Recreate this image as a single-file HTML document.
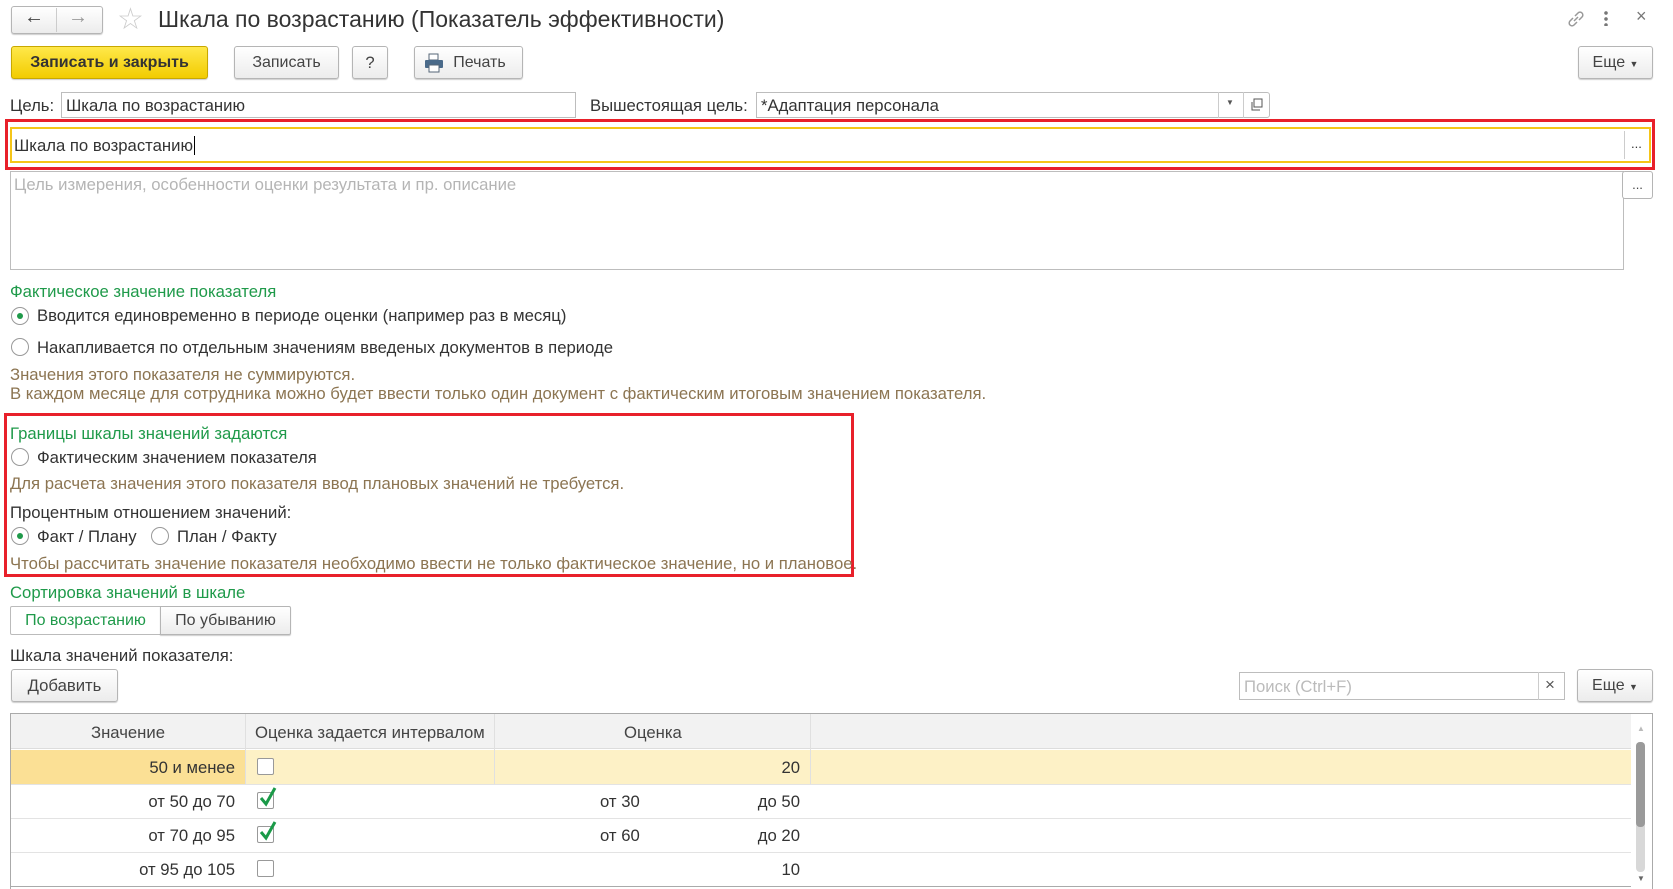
<!DOCTYPE html>
<html><head><meta charset="utf-8"><style>
*{box-sizing:border-box;margin:0;padding:0}
body{width:1673px;height:889px;overflow:hidden;background:#fff;font-family:"Liberation Sans",Arial,sans-serif;font-size:16.7px;color:#333;position:relative}
.a{position:absolute;white-space:nowrap}
.btn{position:absolute;border:1px solid #b5b5b5;border-radius:3px;background:linear-gradient(#fff,#ececec);box-shadow:0 1px 1px rgba(0,0,0,.2);text-align:center;color:#444}
.inp{position:absolute;border:1px solid #bdbdbd;background:#fff}
.g{color:#1f9a4a}
.n{color:#8c7552}
.rad{position:absolute;width:18px;height:18px;border:1px solid #999;border-radius:50%;background:#fff}
.rad.on::after{content:"";position:absolute;left:5px;top:5px;width:6px;height:6px;border-radius:50%;background:#1f9a4a}
.red{position:absolute;border:3px solid #e8202a}
.cb{position:absolute;width:17px;height:17px;border:1px solid #999;border-radius:2px;background:#fff}
</style></head><body>
<!-- nav -->
<div class="btn" style="left:11px;top:6px;width:92px;height:28px"></div>
<div class="a" style="left:56px;top:8px;width:1px;height:24px;background:#ccc"></div>
<div class="a" style="left:24px;top:6px;font-size:20px;color:#444">&#8592;</div>
<div class="a" style="left:68px;top:6px;font-size:20px;color:#999">&#8594;</div>
<div class="a" style="left:117px;top:2px;font-size:30px;color:#ccc">&#9734;</div>
<div class="a" style="left:158px;top:6px;font-size:23px;color:#333">Шкала по возрастанию (Показатель эффективности)</div>
<svg class="a" style="left:1566px;top:9px" width="20" height="20" viewBox="0 0 20 20" fill="none" stroke="#999" stroke-width="1.5"><path d="M8 12l4-4"/><path d="M7 9l-3 3a2.8 2.8 0 004 4l3-3"/><path d="M13 11l3-3a2.8 2.8 0 00-4-4l-3 3"/></svg>
<div class="a" style="left:1604px;top:10px;width:4px;height:16px;background:radial-gradient(circle,#777 1.6px,transparent 2px) 0 0/4px 6px"></div>
<div class="a" style="left:1636px;top:6px;font-size:18px;color:#777">×</div>
<!-- buttons -->
<div class="btn" style="left:11px;top:46px;width:197px;height:33px;background:linear-gradient(#ffe84a,#f2cc00);border-color:#c8a800;color:#333;font-weight:bold;line-height:31px;font-size:16px">Записать и закрыть</div>
<div class="btn" style="left:234px;top:46px;width:105px;height:33px;line-height:31px;font-size:16px">Записать</div>
<div class="btn" style="left:352px;top:46px;width:36px;height:33px;line-height:31px">?</div>
<div class="btn" style="left:414px;top:46px;width:109px;height:33px;line-height:31px;padding-left:22px;font-size:16px">Печать</div>
<svg class="a" style="left:424px;top:53px" width="20" height="20" viewBox="0 0 20 20"><rect x="5" y="1" width="9" height="6" fill="#fff" stroke="#567"/><rect x="1" y="7" width="18" height="8" rx="1" fill="#4a6a8a"/><rect x="5" y="12" width="10" height="7" fill="#fff" stroke="#567"/></svg>
<div class="btn" style="left:1578px;top:46px;width:75px;height:33px;line-height:31px;font-size:16px">Еще <span style="font-size:9px">▼</span></div>
<!-- goal row -->
<div class="a" style="left:10px;top:96px">Цель:</div>
<div class="inp" style="left:61px;top:92px;width:515px;height:26px;padding:3px 4px">Шкала по возрастанию</div>
<div class="a" style="left:590px;top:96px">Вышестоящая цель:</div>
<div class="inp" style="left:756px;top:92px;width:514px;height:26px;padding:3px 4px;border-radius:0 3px 3px 0">*Адаптация персонала</div>
<div class="a" style="left:1218px;top:92px;width:1px;height:26px;background:#ccc"></div>
<div class="a" style="left:1243px;top:92px;width:1px;height:26px;background:#ccc"></div>
<div class="a" style="left:1226px;top:98px;font-size:8px;color:#555">▼</div>
<svg class="a" style="left:1249px;top:97px" width="15" height="15" viewBox="0 0 15 15" fill="none" stroke="#555"><rect x="5" y="2" width="8" height="8"/><path d="M3 5v8h8"/></svg>
<!-- red box 1 -->
<div class="red" style="left:5px;top:119px;width:1650px;height:51px"></div>
<div class="a" style="left:10px;top:127px;width:1641px;height:36px;border:2px solid #f5c518;background:#fff"></div>
<div class="a" style="left:1624px;top:131px;width:1px;height:28px;background:#ccc"></div>
<div class="a" style="left:14px;top:136px">Шкала по возрастанию<span style="border-left:1px solid #000;margin-left:1px"></span></div>
<div class="a" style="left:1631px;top:136px;font-size:13px">...</div>
<!-- textarea -->
<div class="inp" style="left:10px;top:171px;width:1614px;height:99px"></div>
<div class="a" style="left:14px;top:175px;color:#b5b5b5">Цель измерения, особенности оценки результата и пр. описание</div>
<div class="btn" style="left:1622px;top:171px;width:31px;height:28px;font-size:13px;line-height:26px;box-shadow:none;background:#fff">...</div>
<!-- fact section -->
<div class="a g" style="left:10px;top:282px">Фактическое значение показателя</div>
<div class="rad on" style="left:11px;top:307px"></div>
<div class="a" style="left:37px;top:306px">Вводится единовременно в периоде оценки (например раз в месяц)</div>
<div class="rad" style="left:11px;top:338px"></div>
<div class="a" style="left:37px;top:338px">Накапливается по отдельным значениям введеных документов в периоде</div>
<div class="a n" style="left:10px;top:365px">Значения этого показателя не суммируются.</div>
<div class="a n" style="left:10px;top:384px">В каждом месяце для сотрудника можно будет ввести только один документ с фактическим итоговым значением показателя.</div>
<!-- red box 2 -->
<div class="red" style="left:4px;top:413px;width:850px;height:164px"></div>
<div class="a g" style="left:10px;top:424px">Границы шкалы значений задаются</div>
<div class="rad" style="left:11px;top:448px"></div>
<div class="a" style="left:37px;top:448px">Фактическим значением показателя</div>
<div class="a n" style="left:10px;top:474px">Для расчета значения этого показателя ввод плановых значений не требуется.</div>
<div class="a" style="left:10px;top:503px">Процентным отношением значений:</div>
<div class="rad on" style="left:11px;top:527px"></div>
<div class="a" style="left:37px;top:527px">Факт / Плану</div>
<div class="rad" style="left:151px;top:527px"></div>
<div class="a" style="left:177px;top:527px">План / Факту</div>
<div class="a n" style="left:10px;top:554px">Чтобы рассчитать значение показателя необходимо ввести не только фактическое значение, но и плановое.</div>
<!-- sort -->
<div class="a g" style="left:10px;top:583px">Сортировка значений в шкале</div>
<div class="a" style="left:10px;top:606px;width:151px;height:29px;border:1px solid #bbb;background:#fff;color:#1f9a4a;text-align:center;line-height:27px;border-radius:2px 0 0 2px;font-size:16px">По возрастанию</div>
<div class="btn" style="left:160px;top:606px;width:131px;height:29px;line-height:27px;border-radius:0 2px 2px 0;font-size:16px">По убыванию</div>
<div class="a" style="left:10px;top:646px">Шкала значений показателя:</div>
<div class="btn" style="left:11px;top:669px;width:107px;height:33px;line-height:31px">Добавить</div>
<div class="inp" style="left:1239px;top:672px;width:326px;height:28px;padding:4px;color:#bbb">Поиск (Ctrl+F)</div>
<div class="a" style="left:1538px;top:672px;width:1px;height:28px;background:#ccc"></div>
<div class="a" style="left:1545px;top:675px;font-size:17px;color:#555">×</div>
<div class="btn" style="left:1577px;top:669px;width:76px;height:33px;line-height:31px;font-size:16px">Еще <span style="font-size:9px">▼</span></div>
<!-- table -->
<div class="a" style="left:10px;top:713px;width:1643px;height:176px;border:1px solid #aaa;border-bottom:none;overflow:hidden">
 <div class="a" style="left:0;top:0;width:1620px;height:35px;background:#f2f2f2;border-bottom:1px solid #ddd"></div>
 <div class="a" style="left:0;top:36px;width:1620px;height:34px;background:#fdf1c6"></div>
 <div class="a" style="left:0;top:36px;width:234px;height:34px;background:#fbe095"></div>
 <div class="a" style="left:0;top:70px;width:1620px;height:1px;background:#e3e3e3"></div>
 <div class="a" style="left:0;top:104px;width:1620px;height:1px;background:#e3e3e3"></div>
 <div class="a" style="left:0;top:138px;width:1620px;height:1px;background:#e3e3e3"></div>
 <div class="a" style="left:0;top:172px;width:1620px;height:1px;background:#aaa"></div>
 <div class="a" style="left:234px;top:0;width:1px;height:70px;background:#e0e0e0"></div>
 <div class="a" style="left:483px;top:0;width:1px;height:70px;background:#e0e0e0"></div>
 <div class="a" style="left:799px;top:0;width:1px;height:70px;background:#e0e0e0"></div>
 <div class="a" style="left:80px;top:9px;color:#444">Значение</div>
 <div class="a" style="left:244px;top:9px;color:#444">Оценка задается интервалом</div>
 <div class="a" style="left:613px;top:9px;color:#444">Оценка</div>
 <div class="a" style="left:0;top:44px;width:224px;text-align:right">50 и менее</div>
 <div class="a" style="left:0;top:78px;width:224px;text-align:right">от 50 до 70</div>
 <div class="a" style="left:0;top:112px;width:224px;text-align:right">от 70 до 95</div>
 <div class="a" style="left:0;top:146px;width:224px;text-align:right">от 95 до 105</div>
 <div class="cb" style="left:246px;top:44px"></div>
 <div class="cb" style="left:246px;top:78px"></div>
 <div class="cb" style="left:246px;top:112px"></div>
 <div class="cb" style="left:246px;top:146px"></div>
 <svg class="a" style="left:247px;top:72px" width="20" height="22"><path d="M3 12l5 6 9-16" fill="none" stroke="#1a9a48" stroke-width="3"/></svg>
 <svg class="a" style="left:247px;top:106px" width="20" height="22"><path d="M3 12l5 6 9-16" fill="none" stroke="#1a9a48" stroke-width="3"/></svg>
 <div class="a" style="left:0;top:44px;width:789px;text-align:right">20</div>
 <div class="a" style="left:589px;top:78px">от 30</div>
 <div class="a" style="left:0;top:78px;width:789px;text-align:right">до 50</div>
 <div class="a" style="left:589px;top:112px">от 60</div>
 <div class="a" style="left:0;top:112px;width:789px;text-align:right">до 20</div>
 <div class="a" style="left:0;top:146px;width:789px;text-align:right">10</div>
 <div class="a" style="left:1626px;top:10px;font-size:8px;color:#bbb">▲</div>
 <div class="a" style="left:1625px;top:28px;width:9px;height:130px;border-radius:4px;background:#d8d8d8"></div>
 <div class="a" style="left:1625px;top:28px;width:9px;height:85px;border-radius:4px;background:#9a9a9a"></div>
 <div class="a" style="left:1626px;top:160px;font-size:8px;color:#666">▼</div>
</div>
</body></html>
